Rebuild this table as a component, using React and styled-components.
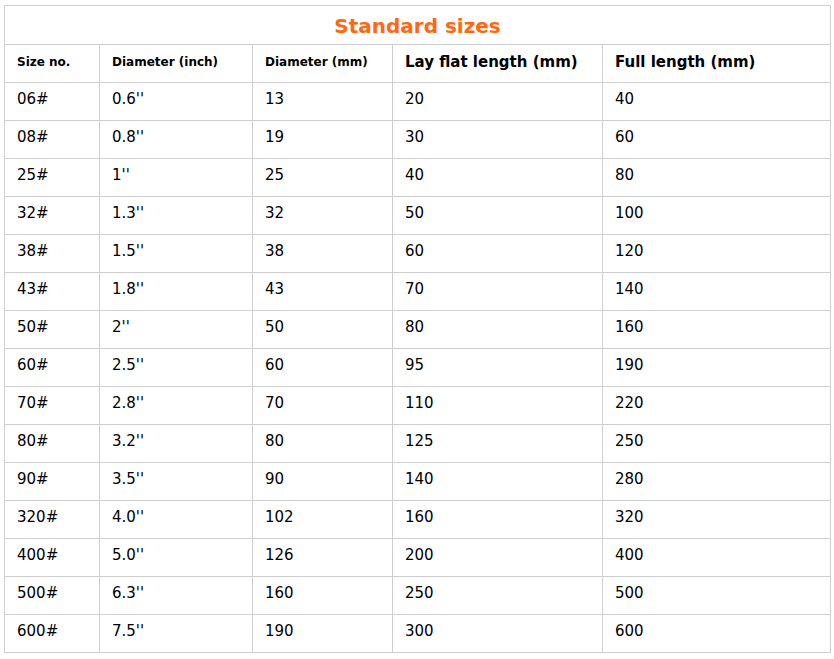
import React from 'react';
import styled, { createGlobalStyle } from 'styled-components';

const GlobalStyle = createGlobalStyle`
  body {
    margin: 0;
    background: #fff;
    font-family: "DejaVu Sans", Verdana, sans-serif;
    color: #000;
  }
`;

const Wrap = styled.div`
  padding: 5px 4px;
`;

const Table = styled.table`
  border-collapse: collapse;
  table-layout: fixed;
  width: 826px;
`;

const Title = styled.th`
  height: 37px;
  padding: 1px 0 0;
  border: 1px solid #cfcfcf;
  color: #ff6813;
  font-size: 20px;
  font-weight: bold;
  text-align: center;
  vertical-align: middle;
`;

const Head = styled.th`
  height: 33px;
  padding: 0 0 4px 12px;
  border: 1px solid #cfcfcf;
  font-size: ${(p) => (p.$big ? '15px' : '12px')};
  font-weight: bold;
  text-align: left;
  vertical-align: middle;
`;

const Cell = styled.td`
  height: 31px;
  padding: 0 0 6px 12px;
  border: 1px solid #cfcfcf;
  font-size: 15px;
  text-align: left;
  vertical-align: middle;
`;

const columns = [
  { label: 'Size no.', width: 95 },
  { label: 'Diameter (inch)', width: 153 },
  { label: 'Diameter (mm)', width: 140 },
  { label: 'Lay flat length (mm)', width: 210, big: true },
  { label: 'Full length (mm)', width: 228, big: true },
];

const rows = [
  ['06#', "0.6''", '13', '20', '40'],
  ['08#', "0.8''", '19', '30', '60'],
  ['25#', "1''", '25', '40', '80'],
  ['32#', "1.3''", '32', '50', '100'],
  ['38#', "1.5''", '38', '60', '120'],
  ['43#', "1.8''", '43', '70', '140'],
  ['50#', "2''", '50', '80', '160'],
  ['60#', "2.5''", '60', '95', '190'],
  ['70#', "2.8''", '70', '110', '220'],
  ['80#', "3.2''", '80', '125', '250'],
  ['90#', "3.5''", '90', '140', '280'],
  ['320#', "4.0''", '102', '160', '320'],
  ['400#', "5.0''", '126', '200', '400'],
  ['500#', "6.3''", '160', '250', '500'],
  ['600#', "7.5''", '190', '300', '600'],
];

const App = () => (
  <>
    <GlobalStyle />
    <Wrap>
      <Table>
        <colgroup>
          {columns.map((c) => (
            <col key={c.label} style={{ width: c.width }} />
          ))}
        </colgroup>
        <thead>
          <tr>
            <Title colSpan={5}>Standard sizes</Title>
          </tr>
          <tr>
            {columns.map((c) => (
              <Head key={c.label} $big={c.big}>{c.label}</Head>
            ))}
          </tr>
        </thead>
        <tbody>
          {rows.map((r) => (
            <tr key={r[0]}>
              {r.map((v, i) => (
                <Cell key={i}>{v}</Cell>
              ))}
            </tr>
          ))}
        </tbody>
      </Table>
    </Wrap>
  </>
);

export default App;
